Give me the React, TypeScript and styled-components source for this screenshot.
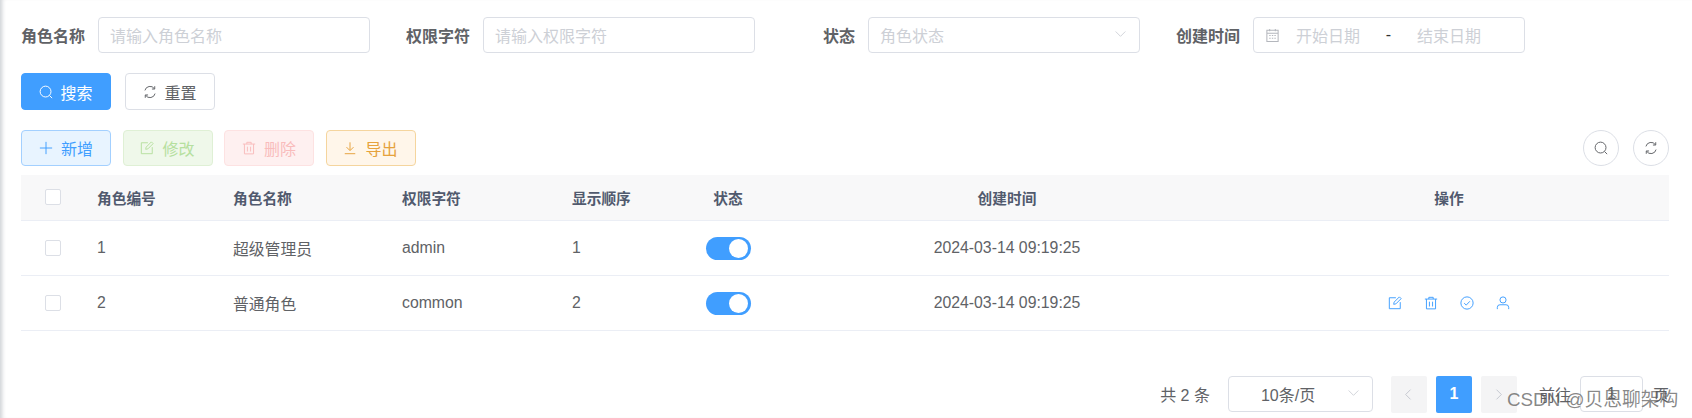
import * as React from "react";
import styled, { createGlobalStyle } from "styled-components";

const GlobalStyle = createGlobalStyle`
  html, body {
    margin: 0;
    padding: 0;
    background: #fff;
    overflow: hidden;
  }
  * { box-sizing: border-box; }
`;

const Page = styled.div`
  position: relative;
  width: 1692px;
  height: 418px;
  padding: 17px 23px 0 21px;
  overflow: hidden;
  font-family: "Liberation Sans", "Noto Sans CJK SC", sans-serif;
  font-size: 16px;
  color: #606266;
  box-shadow: inset 5px 0 4px -3px rgba(0, 21, 41, 0.2);
`;

const FormRow = styled.div`
  display: flex;
  align-items: center;
  height: 36px;
`;

const Label = styled.label`
  width: 64px;
  margin-right: 13px;
  text-align: right;
  font-weight: 700;
  white-space: nowrap;
`;

const Control = styled.div`
  display: flex;
  align-items: center;
  width: 272px;
  height: 36px;
  margin-right: 36px;
  padding: 0 12px 0 11px;
  border: 1px solid #dcdfe6;
  border-radius: 4px;
  background: #fff;
  justify-content: space-between;
`;

const Placeholder = styled.span`
  color: #cdd0d6;
`;

const DateIcon = styled.span`
  display: flex;
  width: 30px;
  color: #b4b7bd;
`;

const DatePart = styled.span`
  width: 64px;
  color: #cdd0d6;
  white-space: nowrap;
`;

const DateDash = styled.span`
  width: 57px;
  text-align: center;
  color: #303133;
`;

const DateControl = styled(Control)`
  justify-content: flex-start;
  padding: 0 0 0 11px;
  margin-right: 0;
  ${DateIcon} { margin-right: 1px; }
`;

const ButtonRow = styled.div`
  display: flex;
  gap: 14px;
  margin-top: 20px;
`;

const Button = styled.button<{ $primary?: boolean }>`
  display: flex;
  align-items: center;
  justify-content: center;
  gap: 7px;
  width: 90px;
  height: 37px;
  padding: 0;
  font: inherit;
  border-radius: 4px;
  border: 1px solid ${(p) => (p.$primary ? "#409eff" : "#dcdfe6")};
  background: ${(p) => (p.$primary ? "#409eff" : "#fff")};
  color: ${(p) => (p.$primary ? "#fff" : "#606266")};
`;

const Toolbar = styled.div`
  display: flex;
  align-items: center;
  gap: 11.5px;
  height: 36px;
  margin-top: 20px;
  margin-bottom: 9px;
`;

const toneStyles = {
  blue: "background:#e8f4ff;border-color:#a3d0ff;color:#409eff;",
  green: "background:#eff8ea;border-color:#dff0d5;color:#b6e09f;",
  red: "background:#fef0f0;border-color:#fde2e2;color:#f9bcbc;",
  orange: "background:#fff6ea;border-color:#f5d59e;color:#e6a23c;",
};

const PlainButton = styled.button<{ $tone: keyof typeof toneStyles }>`
  display: flex;
  align-items: center;
  justify-content: center;
  gap: 8px;
  width: 90px;
  height: 36px;
  padding: 0;
  font: inherit;
  border: 1px solid;
  border-radius: 4px;
  ${(p) => toneStyles[p.$tone]}
`;

const ToolbarRight = styled.div`
  display: flex;
  gap: 14px;
  margin-left: auto;
`;

const CircleButton = styled.button`
  display: flex;
  align-items: center;
  justify-content: center;
  width: 36px;
  height: 36px;
  padding: 0;
  border: 1px solid #dcdfe6;
  border-radius: 50%;
  background: #fff;
  color: #606266;
`;

const GRID = "63px 136px 169px 170px 112px 114px 444px 1fr";

const HeadRow = styled.div`
  display: grid;
  grid-template-columns: ${GRID};
  align-items: center;
  height: 46px;
  padding-bottom: 1px;
  background: #f8f8f9;
  border-bottom: 1px solid #ebeef5;
  font-size: 14.7px;
  font-weight: 700;
  color: #515a6e;
`;

const BodyRow = styled.div`
  display: grid;
  grid-template-columns: ${GRID};
  align-items: center;
  height: 55px;
  border-bottom: 1px solid #ebeef5;
  font-size: 15.8px;
`;

const Cell = styled.div<{ $center?: boolean }>`
  padding: 0 13px;
  white-space: nowrap;
  text-align: ${(p) => (p.$center ? "center" : "left")};
`;

const CheckCell = styled.div`
  display: flex;
  justify-content: center;
`;

const Checkbox = styled.span`
  display: block;
  width: 16px;
  height: 16px;
  border: 1px solid #dcdfe6;
  border-radius: 2px;
  background: #fff;
`;

const SwitchCell = styled.div`
  display: flex;
  justify-content: center;
`;

const Switch = styled.span`
  position: relative;
  display: block;
  width: 45px;
  height: 23px;
  border-radius: 12px;
  background: #409eff;

  &::after {
    content: "";
    position: absolute;
    top: 2px;
    right: 3px;
    width: 19px;
    height: 19px;
    border-radius: 50%;
    background: #fff;
  }
`;

const ActionCell = styled.div`
  display: flex;
  justify-content: center;
  gap: 22px;
  color: #409eff;
`;

const Pagination = styled.div`
  display: flex;
  align-items: center;
  justify-content: flex-end;
  height: 36px;
  margin-top: 45px;
`;

const Total = styled.span`
  margin-right: 18px;
  white-space: nowrap;
`;

const SizeSelect = styled.div`
  display: flex;
  align-items: center;
  width: 145px;
  height: 36px;
  margin-right: 18px;
  padding: 0 12px 0 32px;
  border: 1px solid #dcdfe6;
  border-radius: 4px;
  justify-content: space-between;
`;

const PageButton = styled.span<{ $active?: boolean }>`
  display: flex;
  align-items: center;
  justify-content: center;
  width: 36px;
  height: 37px;
  margin-right: 9px;
  border-radius: 2px;
  font-weight: 700;
  background: ${(p) => (p.$active ? "#409eff" : "#f4f4f5")};
  color: ${(p) => (p.$active ? "#fff" : "#c0c4cc")};
`;

const Jump = styled.span`
  margin-left: 13px;
  white-space: nowrap;
`;

const JumpInput = styled.div`
  display: flex;
  align-items: center;
  justify-content: center;
  width: 63px;
  height: 36px;
  margin: 0 10px 0 9px;
  border: 1px solid #dcdfe6;
  border-radius: 4px;
`;

const Watermark = styled.div`
  position: absolute;
  left: 1507px;
  top: 388px;
  font-size: 18.8px;
  line-height: 24px;
  color: rgba(90, 90, 90, 0.72);
  white-space: nowrap;
`;

const Icon = ({ size = 14, children }: { size?: number; children: React.ReactNode }) => (
  <svg width={size} height={size} viewBox="0 0 16 16" fill="none" stroke="currentColor" strokeWidth="1.1" style={{ flexShrink: 0 }}>
    {children}
  </svg>
);

const SearchIcon = () => (
  <Icon>
    <circle cx="7.5" cy="7.5" r="6.2" />
    <path d="M12 12l3 3" />
  </Icon>
);

const RefreshIcon = () => (
  <Icon>
    <path d="M2.2 6.2A6 6 0 0 1 13 4.2" />
    <path d="M13.8 9.8A6 6 0 0 1 3 11.8" />
    <path d="M13.4 1.4v3.2h-3.2M2.6 14.6v-3.2h3.2" />
  </Icon>
);

const PlusIcon = () => (
  <Icon>
    <path d="M8 1v14M1 8h14" />
  </Icon>
);

const EditIcon = () => (
  <Icon>
    <path d="M9 2H1.5v12.5H14V7" />
    <path d="M6.5 9.5l.5-2.5L13 1l2 2-6 6z" />
  </Icon>
);

const TrashIcon = () => (
  <Icon>
    <path d="M1 3.5h14M5.5 3.5V1.5h5v2M2.8 3.5v11.2h10.4V3.5M6.2 6.5v5.5M9.8 6.5v5.5" />
  </Icon>
);

const DownloadIcon = () => (
  <Icon>
    <path d="M2 14.5h12M8 1.5v9M4 7l4 4 4-4" />
  </Icon>
);

const CheckCircleIcon = () => (
  <Icon>
    <circle cx="8" cy="8" r="7" />
    <path d="M4.8 8.2l2.3 2.2 4.2-4.4" />
  </Icon>
);

const UserIcon = () => (
  <Icon>
    <circle cx="8" cy="4.5" r="3.5" />
    <path d="M1.5 15v-2a3 3 0 0 1 3-3h7a3 3 0 0 1 3 3v2" />
  </Icon>
);

const CalendarIcon = () => (
  <Icon size={15}>
    <path d="M2 2.5h12v12H2zM2 5.5h12M5 1v2.5M11 1v2.5" />
    <path d="M4.5 8h1.5M7.3 8h1.5M10 8h1.5M4.5 11h1.5M7.3 11h1.5M10 11h1.5" />
  </Icon>
);

const Chevron = ({ dir = "down", size = 14 }: { dir?: "down" | "left" | "right"; size?: number }) => (
  <Icon size={size}>
    {dir === "down" && <path d="M2 5.5l6 6 6-6" />}
    {dir === "left" && <path d="M10.5 2l-6 6 6 6" />}
    {dir === "right" && <path d="M5.5 2l6 6-6 6" />}
  </Icon>
);

const roles = [
  { id: 1, name: "超级管理员", key: "admin", sort: 1, time: "2024-03-14 09:19:25", actions: false },
  { id: 2, name: "普通角色", key: "common", sort: 2, time: "2024-03-14 09:19:25", actions: true },
];

export default function App() {
  return (
    <Page>
      <GlobalStyle />
      <FormRow>
        <Label>角色名称</Label>
        <Control><Placeholder>请输入角色名称</Placeholder></Control>
        <Label>权限字符</Label>
        <Control><Placeholder>请输入权限字符</Placeholder></Control>
        <Label>状态</Label>
        <Control>
          <Placeholder>角色状态</Placeholder>
          <Placeholder><Chevron size={13} /></Placeholder>
        </Control>
        <Label>创建时间</Label>
        <DateControl>
          <DateIcon><CalendarIcon /></DateIcon>
          <DatePart>开始日期</DatePart>
          <DateDash>-</DateDash>
          <DatePart>结束日期</DatePart>
        </DateControl>
      </FormRow>

      <ButtonRow>
        <Button $primary><SearchIcon />搜索</Button>
        <Button><RefreshIcon />重置</Button>
      </ButtonRow>

      <Toolbar>
        <PlainButton $tone="blue"><PlusIcon />新增</PlainButton>
        <PlainButton $tone="green"><EditIcon />修改</PlainButton>
        <PlainButton $tone="red"><TrashIcon />删除</PlainButton>
        <PlainButton $tone="orange"><DownloadIcon />导出</PlainButton>
        <ToolbarRight>
          <CircleButton><SearchIcon /></CircleButton>
          <CircleButton><RefreshIcon /></CircleButton>
        </ToolbarRight>
      </Toolbar>

      <HeadRow>
        <CheckCell><Checkbox /></CheckCell>
        <Cell>角色编号</Cell>
        <Cell>角色名称</Cell>
        <Cell>权限字符</Cell>
        <Cell>显示顺序</Cell>
        <Cell $center>状态</Cell>
        <Cell $center>创建时间</Cell>
        <Cell $center>操作</Cell>
      </HeadRow>
      {roles.map((r) => (
        <BodyRow key={r.id}>
          <CheckCell><Checkbox /></CheckCell>
          <Cell>{r.id}</Cell>
          <Cell>{r.name}</Cell>
          <Cell>{r.key}</Cell>
          <Cell>{r.sort}</Cell>
          <SwitchCell><Switch /></SwitchCell>
          <Cell $center>{r.time}</Cell>
          <ActionCell>
            {r.actions && (
              <>
                <EditIcon />
                <TrashIcon />
                <CheckCircleIcon />
                <UserIcon />
              </>
            )}
          </ActionCell>
        </BodyRow>
      ))}

      <Pagination>
        <Total>共 2 条</Total>
        <SizeSelect>
          10条/页
          <Placeholder><Chevron size={13} /></Placeholder>
        </SizeSelect>
        <PageButton><Chevron dir="left" size={13} /></PageButton>
        <PageButton $active>1</PageButton>
        <PageButton><Chevron dir="right" size={13} /></PageButton>
        <Jump>前往</Jump>
        <JumpInput>1</JumpInput>
        <span>页</span>
      </Pagination>
      <Watermark>CSDN @贝恩聊架构</Watermark>
    </Page>
  );
}
